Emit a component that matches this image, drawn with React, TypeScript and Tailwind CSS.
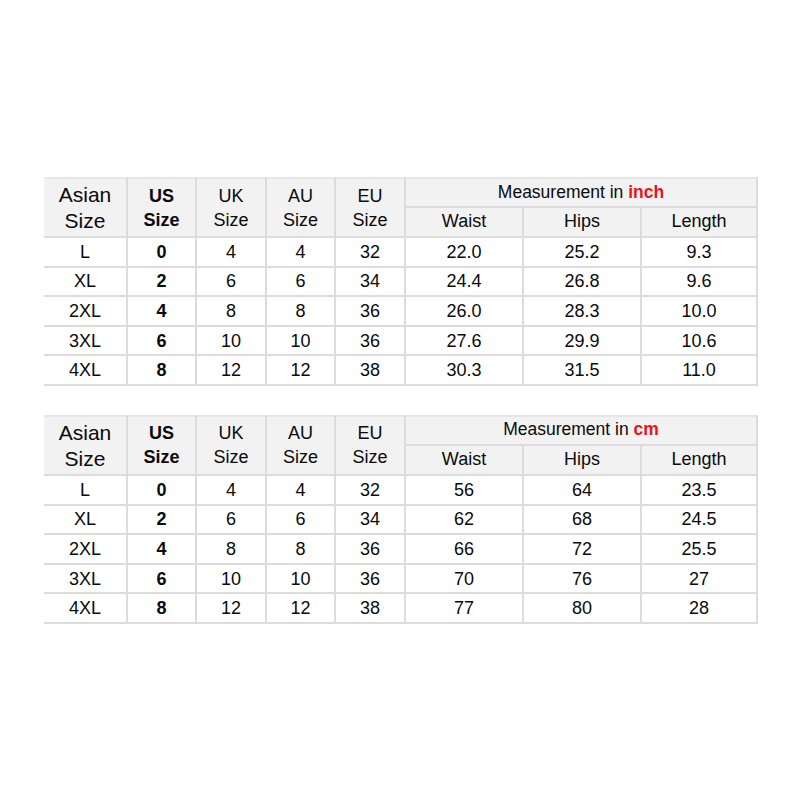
import React from 'react';

type Row = [string, string, string, string, string, string, string, string];

const INCH_ROWS: Row[] = [
  ['L', '0', '4', '4', '32', '22.0', '25.2', '9.3'],
  ['XL', '2', '6', '6', '34', '24.4', '26.8', '9.6'],
  ['2XL', '4', '8', '8', '36', '26.0', '28.3', '10.0'],
  ['3XL', '6', '10', '10', '36', '27.6', '29.9', '10.6'],
  ['4XL', '8', '12', '12', '38', '30.3', '31.5', '11.0'],
];

const CM_ROWS: Row[] = [
  ['L', '0', '4', '4', '32', '56', '64', '23.5'],
  ['XL', '2', '6', '6', '34', '62', '68', '24.5'],
  ['2XL', '4', '8', '8', '36', '66', '72', '25.5'],
  ['3XL', '6', '10', '10', '36', '70', '76', '27'],
  ['4XL', '8', '12', '12', '38', '77', '80', '28'],
];

const WIDTHS = [83, 69, 70, 69, 70, 118, 118, 116];

function SizeTable({ unit, rows }: { unit: string; rows: Row[] }) {
  const th = 'border-r-2 border-b-2 border-[#dcdcdc] bg-[#f2f2f2] text-center align-middle p-0';
  const td = 'border-r-2 border-b-2 border-[#dcdcdc] text-center align-middle p-0 text-[18px] leading-[20px]';
  return (
    <table className="table-fixed border-collapse w-[713px] text-[#0a0a0a]">
      <colgroup>
        {WIDTHS.map((w, i) => (
          <col key={i} style={{ width: w }} />
        ))}
      </colgroup>
      <thead>
        <tr className="h-[29px] border-t-2 border-[#e6e6e6]">
          <th rowSpan={2} className={th}>
            <span className="block font-normal text-[21px] leading-[26px] pt-[1px]">
              Asian
              <br />
              Size
            </span>
          </th>
          <th rowSpan={2} className={th}>
            <span className="block font-bold text-[18px] leading-[24px]">
              US
              <br />
              Size
            </span>
          </th>
          {['UK', 'AU', 'EU'].map((k) => (
            <th key={k} rowSpan={2} className={th}>
              <span className="block font-normal text-[18px] leading-[24px]">
                {k}
                <br />
                Size
              </span>
            </th>
          ))}
          <th colSpan={3} className={th}>
            <span className="font-normal text-[17.5px] leading-[20px]">
              Measurement in <span className="font-bold text-[#e8141b]">{unit}</span>
            </span>
          </th>
        </tr>
        <tr className="h-[30px]">
          {['Waist', 'Hips', 'Length'].map((k) => (
            <th key={k} className={th}>
              <span className="font-normal text-[18px] leading-[20px]">{k}</span>
            </th>
          ))}
        </tr>
      </thead>
      <tbody>
        {rows.map((r, i) => (
          <tr key={i} className="h-[29.6px]">
            {r.map((c, j) => (
              <td key={j} className={td}>
                {j === 1 ? <span className="font-bold text-[18px]">{c}</span> : c}
              </td>
            ))}
          </tr>
        ))}
      </tbody>
    </table>
  );
}

export default function App() {
  return (
    <div
      className="w-[800px] h-[800px] bg-white pt-[177px] pl-[44px] flex flex-col gap-[29px]"
      style={{ fontFamily: '"Liberation Sans", Arial, sans-serif' }}
    >
      <SizeTable unit="inch" rows={INCH_ROWS} />
      <SizeTable unit="cm" rows={CM_ROWS} />
    </div>
  );
}
